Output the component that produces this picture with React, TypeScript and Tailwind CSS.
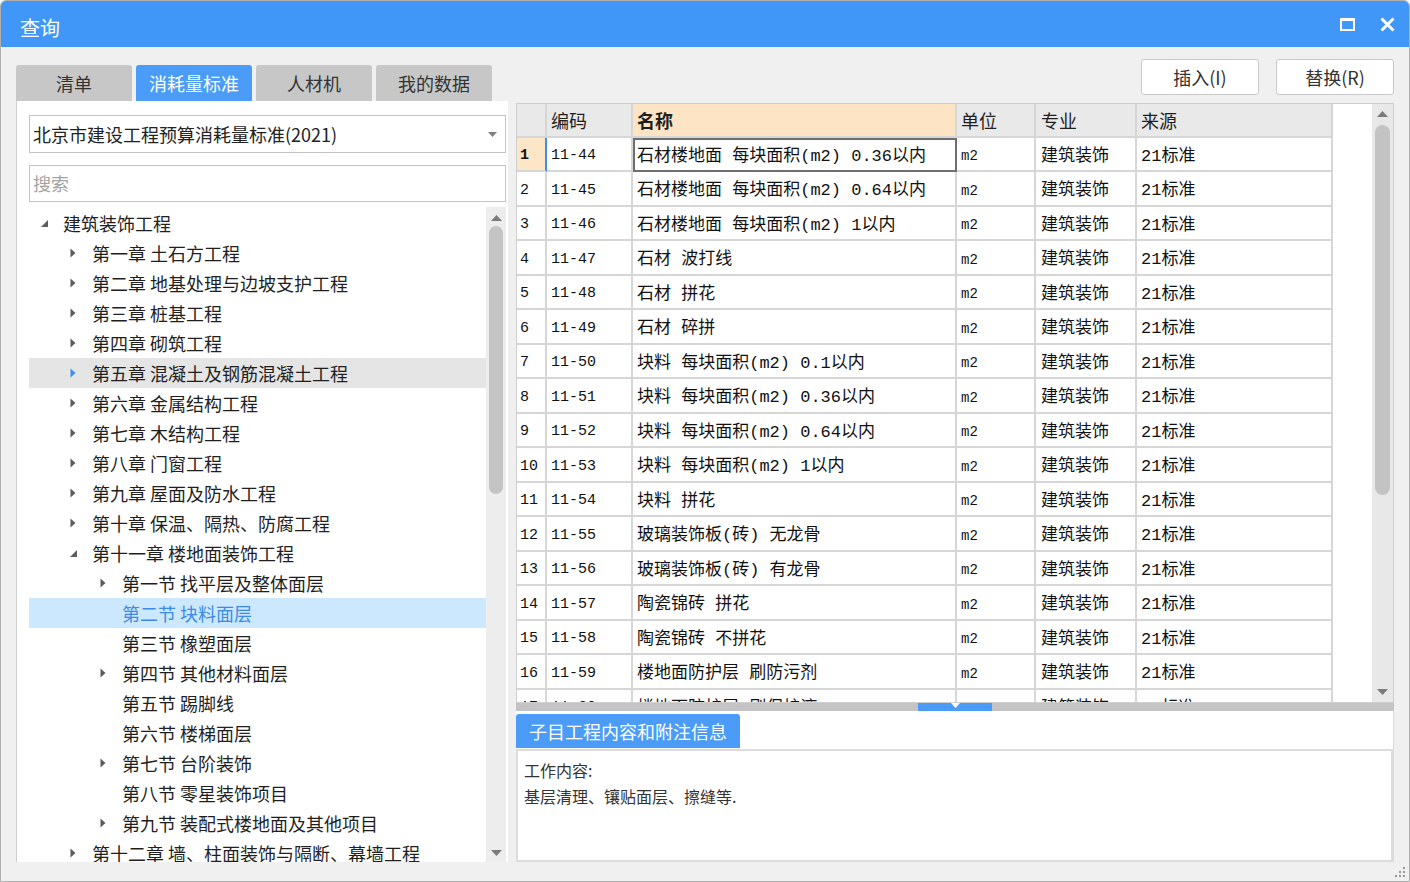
import React from "react";

type Node = { l: number; t: string; s?: "open" | "closed"; hover?: boolean; sel?: boolean };

const tree: Node[] = [
  { l: 0, t: "建筑装饰工程", s: "open" },
  { l: 1, t: "第一章 土石方工程", s: "closed" },
  { l: 1, t: "第二章 地基处理与边坡支护工程", s: "closed" },
  { l: 1, t: "第三章 桩基工程", s: "closed" },
  { l: 1, t: "第四章 砌筑工程", s: "closed" },
  { l: 1, t: "第五章 混凝土及钢筋混凝土工程", s: "closed", hover: true },
  { l: 1, t: "第六章 金属结构工程", s: "closed" },
  { l: 1, t: "第七章 木结构工程", s: "closed" },
  { l: 1, t: "第八章 门窗工程", s: "closed" },
  { l: 1, t: "第九章 屋面及防水工程", s: "closed" },
  { l: 1, t: "第十章 保温、隔热、防腐工程", s: "closed" },
  { l: 1, t: "第十一章 楼地面装饰工程", s: "open" },
  { l: 2, t: "第一节 找平层及整体面层", s: "closed" },
  { l: 2, t: "第二节 块料面层", sel: true },
  { l: 2, t: "第三节 橡塑面层" },
  { l: 2, t: "第四节 其他材料面层", s: "closed" },
  { l: 2, t: "第五节 踢脚线" },
  { l: 2, t: "第六节 楼梯面层" },
  { l: 2, t: "第七节 台阶装饰", s: "closed" },
  { l: 2, t: "第八节 零星装饰项目" },
  { l: 2, t: "第九节 装配式楼地面及其他项目", s: "closed" },
  { l: 1, t: "第十二章 墙、柱面装饰与隔断、幕墙工程", s: "closed" },
];

const rows: [string, string][] = [
  ["11-44", "石材楼地面 每块面积(m2) 0.36以内"],
  ["11-45", "石材楼地面 每块面积(m2) 0.64以内"],
  ["11-46", "石材楼地面 每块面积(m2) 1以内"],
  ["11-47", "石材 波打线"],
  ["11-48", "石材 拼花"],
  ["11-49", "石材 碎拼"],
  ["11-50", "块料 每块面积(m2) 0.1以内"],
  ["11-51", "块料 每块面积(m2) 0.36以内"],
  ["11-52", "块料 每块面积(m2) 0.64以内"],
  ["11-53", "块料 每块面积(m2) 1以内"],
  ["11-54", "块料 拼花"],
  ["11-55", "玻璃装饰板(砖) 无龙骨"],
  ["11-56", "玻璃装饰板(砖) 有龙骨"],
  ["11-57", "陶瓷锦砖 拼花"],
  ["11-58", "陶瓷锦砖 不拼花"],
  ["11-59", "楼地面防护层 刷防污剂"],
  ["11-60", "楼地面防护层 刷保护液"],
];

const tabs = ["清单", "消耗量标准", "人材机", "我的数据"];

function Arrow({ s, blue }: { s?: "open" | "closed"; blue?: boolean }) {
  const c = blue ? "#3b8ef0" : "#5c5c5c";
  if (s === "open")
    return (
      <svg width="9" height="9" viewBox="0 0 9 9">
        <path d="M8 1 L8 8 L1 8 Z" fill={c} />
      </svg>
    );
  if (s === "closed")
    return (
      <svg width="6" height="10" viewBox="0 0 6 10">
        <path d="M0.5 0.5 L5.5 5 L0.5 9.5 Z" fill={c} />
      </svg>
    );
  return null;
}

function ScrollUp() {
  return (
    <svg width="11" height="6" viewBox="0 0 11 6">
      <path d="M0 6 L5.5 0 L11 6 Z" fill="#7b7b7b" />
    </svg>
  );
}

function ScrollDown() {
  return (
    <svg width="11" height="6" viewBox="0 0 11 6">
      <path d="M0 0 L5.5 6 L11 0 Z" fill="#7b7b7b" />
    </svg>
  );
}

export default function App() {
  return (
    <div className="w-[1410px] h-[882px] flex flex-col bg-[#f0f0f0] border border-[#b0b0b0] rounded-t-[6px] overflow-hidden font-['Noto_Sans_CJK_SC',sans-serif] text-[#1f1f1f]">
      {/* 标题栏 */}
      <div className="h-[46px] shrink-0 bg-[#4197f7] flex items-center pl-[19px] pr-[14px]">
        <span className="text-white text-[20px] leading-none mt-[7px]">查询</span>
        <div className="ml-auto flex items-center gap-[25px]">
          <svg width="15" height="13" viewBox="0 0 15 13">
            <rect x="1" y="1.5" width="13" height="10.5" fill="none" stroke="#fff" strokeWidth="2" />
            <rect x="0" y="0" width="15" height="3" fill="#fff" />
          </svg>
          <svg width="15" height="15" viewBox="0 0 15 15">
            <path d="M1.5 1.5 L13.5 13.5 M13.5 1.5 L1.5 13.5" stroke="#fff" strokeWidth="3" />
          </svg>
        </div>
      </div>

      <div className="flex-1 min-h-0 overflow-hidden flex pl-[15px]">
        {/* 左侧 */}
        <div className="w-[492px] shrink-0 min-h-0 flex flex-col pt-[18px] pb-[19px]">
          <div className="flex gap-[4px] h-[36px] shrink-0">
            {tabs.map((t, i) => (
              <div
                key={t}
                className={
                  "w-[116px] flex items-center justify-center rounded-t-[3px] text-[18px] " +
                  (i === 1 ? "bg-[#4a9cf8] text-white" : "bg-[#c7c7c7] text-[#333]")
                }
              >
                {t}
              </div>
            ))}
          </div>
          <div className="flex-1 min-h-0 overflow-hidden bg-white border-l border-[#cfcfcf] flex flex-col pt-[14px] pl-[12px] pr-[2px]">
            <div className="h-[38px] shrink-0 border border-[#c4c4c4] flex items-center pl-[3px] pr-[8px]">
              <span className="text-[18px] text-[#222]">北京市建设工程预算消耗量标准(2021)</span>
              <svg className="ml-auto" width="9" height="5" viewBox="0 0 9 5">
                <path d="M0 0 L4.5 5 L9 0 Z" fill="#808080" />
              </svg>
            </div>
            <div className="h-[37px] shrink-0 mt-[12px] border border-[#c4c4c4] flex items-center pl-[3px]">
              <span className="text-[18px] text-[#a3a3a3]">搜索</span>
            </div>
            <div className="flex-1 min-h-0 mt-[5px] flex">
              <div className="flex-1 overflow-hidden pt-[1px]">
                {tree.map((n) => (
                  <div
                    key={n.t}
                    className={
                      "h-[30px] flex items-center whitespace-nowrap " +
                      (n.sel ? "bg-[#cce8ff] text-[#3b8be6]" : n.hover ? "bg-[#e5e5e5]" : "")
                    }
                  >
                    <div className={n.l === 0 ? "w-0" : n.l === 1 ? "w-[29px]" : "w-[59px]"} />
                    <div className="w-[34px] flex items-center justify-center pr-[4px]">
                      <Arrow s={n.s} blue={n.hover} />
                    </div>
                    <span className="text-[18px] leading-none">{n.t}</span>
                  </div>
                ))}
              </div>
              <div className="w-[20px] shrink-0 bg-[#ededed] flex flex-col items-center">
                <div className="h-[14px] flex items-end">
                  <ScrollUp />
                </div>
                <div className="mt-[5px] w-[14px] h-[268px] rounded-full bg-[#c3c3c3]" />
                <div className="mt-auto mb-[6px]">
                  <ScrollDown />
                </div>
              </div>
            </div>
          </div>
        </div>

        {/* 右侧 */}
        <div className="w-[878px] shrink-0 ml-[8px] flex flex-col pt-[12px] pb-[19px]">
          <div className="h-[36px] shrink-0 flex justify-end gap-[17px]">
            <button className="w-[118px] bg-white border border-[#c8c8c8] rounded-[3px] text-[18px] text-[#333]">
              插入(I)
            </button>
            <button className="w-[118px] bg-white border border-[#c8c8c8] rounded-[3px] text-[18px] text-[#333]">
              替换(R)
            </button>
          </div>

          <div className="h-[600px] shrink-0 mt-[8px] border border-[#cfcfcf] bg-white flex overflow-hidden">
            <div className="w-[816px] shrink-0 overflow-hidden">
              <div className="flex h-[34px] bg-[#e9e9e9] text-[18px]">
                <div className="w-[30px] border-r-2 border-b-2 border-[#d6d6d6]" />
                <div className="w-[86px] border-r-2 border-b-2 border-[#d6d6d6] pl-[4px] flex items-center">编码</div>
                <div className="w-[324px] border-r-2 border-b-2 border-[#d6d6d6] bg-[#fde4c4] pl-[4px] flex items-center font-bold">名称</div>
                <div className="w-[79px] border-r-2 border-b-2 border-[#d6d6d6] pl-[4px] flex items-center">单位</div>
                <div className="w-[101px] border-r-2 border-b-2 border-[#d6d6d6] pl-[5px] flex items-center">专业</div>
                <div className="w-[196px] border-r-2 border-b-2 border-[#d6d6d6] pl-[4px] flex items-center">来源</div>
              </div>
              {rows.map(([code, name], i) => (
                <div
                  key={code}
                  className={
                    "flex font-['Liberation_Mono','Noto_Sans_CJK_SC',monospace] text-[#111] " +
                    (i % 2 === 0 ? "h-[34px]" : "h-[35px]")
                  }
                >
                  <div
                    className={
                      "w-[30px] border-r-2 border-b-2 pl-[3px] pt-[5px] flex items-center text-[15px] " +
                      (i === 0 ? "bg-[#fde5c7] border-r-[#3b8ef0] border-b-[#d6d6d6] font-bold" : "border-[#d6d6d6]")
                    }
                  >
                    {i + 1}
                  </div>
                  <div className="w-[86px] border-r-2 border-b-2 border-[#d6d6d6] pl-[4px] pt-[5px] flex items-center text-[15px]">
                    {code}
                  </div>
                  <div
                    className={
                      "w-[324px] border-r-2 border-b-2 pl-[4px] pt-[5px] flex items-center text-[17px] whitespace-nowrap " +
                      (i === 0 ? "border-[#d6d6d6] outline-2 -outline-offset-2 outline-[#6e6e6e]" : "border-[#d6d6d6]")
                    }
                  >
                    {name}
                  </div>
                  <div className="w-[79px] border-r-2 border-b-2 border-[#d6d6d6] pl-[4px] pt-[5px] flex items-center text-[14px]">
                    m2
                  </div>
                  <div className="w-[101px] border-r-2 border-b-2 border-[#d6d6d6] pl-[5px] pt-[5px] flex items-center text-[17px]">
                    建筑装饰
                  </div>
                  <div className="w-[196px] border-r-2 border-b-2 border-[#d6d6d6] pl-[4px] pt-[5px] flex items-center text-[17px]">
                    21标准
                  </div>
                </div>
              ))}
            </div>
            <div className="flex-1" />
            <div className="w-[21px] shrink-0 bg-[#e8e8e8] flex flex-col items-center">
              <div className="h-[13px] flex items-end">
                <ScrollUp />
              </div>
              <div className="mt-[8px] w-[15px] h-[370px] rounded-full bg-[#c3c3c3]" />
              <div className="mt-auto mb-[7px]">
                <ScrollDown />
              </div>
            </div>
          </div>

          {/* 分隔条 */}
          <div className="h-[8px] shrink-0 bg-[#c4c4c4] flex">
            <div className="ml-[402px] w-[74px] bg-[#4a9cf8] flex justify-center">
              <svg width="9" height="5" viewBox="0 0 9 5">
                <path d="M0 0 L4.5 5 L9 0 Z" fill="#fff" />
              </svg>
            </div>
          </div>

          <div className="h-[151px] shrink-0 bg-white border-r border-[#dcdcdc] flex flex-col">
            <div className="h-[38px] shrink-0 pt-[3px] flex">
              <div className="w-[224px] h-[34px] bg-[#4a9cf8] rounded-t-[3px] text-white text-[18px] flex items-center justify-center">
                子目工程内容和附注信息
              </div>
            </div>
            <div className="flex-1 border-2 border-[#dcdcdc] pl-[6px] pt-[6px] text-[16px] leading-[26px] text-[#333]">
              <div>工作内容:</div>
              <div>基层清理、镶贴面层、擦缝等.</div>
            </div>
          </div>
        </div>

        <div className="flex-1 flex flex-col justify-end items-end pb-[3px] pr-[3px]">
          <svg width="11" height="11" viewBox="0 0 11 11">
            <rect x="8" y="0" width="2" height="2" fill="#9a9a9a" />
            <rect x="4" y="4" width="2" height="2" fill="#9a9a9a" />
            <rect x="8" y="4" width="2" height="2" fill="#9a9a9a" />
            <rect x="0" y="8" width="2" height="2" fill="#9a9a9a" />
            <rect x="4" y="8" width="2" height="2" fill="#9a9a9a" />
            <rect x="8" y="8" width="2" height="2" fill="#9a9a9a" />
          </svg>
        </div>
      </div>
    </div>
  );
}
